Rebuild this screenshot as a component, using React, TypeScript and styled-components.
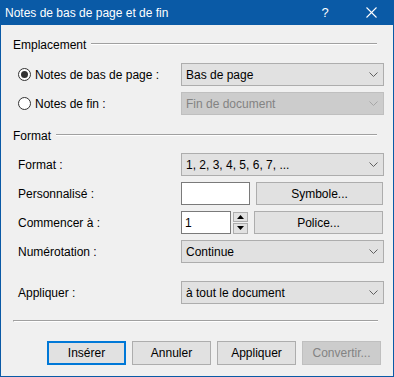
import styled, { createGlobalStyle } from 'styled-components';

const BLUE = '#0a5aa6';

const GlobalStyle = createGlobalStyle`
  html, body {
    margin: 0;
    padding: 0;
    background: #f0f0f0;
  }
  body {
    font-family: 'Liberation Sans', Arial, sans-serif;
    font-size: 12px;
    color: #000;
  }
`;

const Window = styled.div`
  width: 394px;
  height: 377px;
  box-sizing: border-box;
  border: 1px solid ${BLUE};
  border-top: none;
  background: #f0f0f0;
  display: flex;
  flex-direction: column;
`;

const TitleBar = styled.div`
  height: 25px;
  margin: 0 -1px;
  padding-left: 5px;
  background: ${BLUE};
  color: #fff;
  display: flex;
  align-items: center;
`;

const TitleText = styled.span`
  flex: 1;
`;

const TitleButton = styled.div`
  width: 46px;
  height: 25px;
  display: flex;
  align-items: center;
  justify-content: center;
  font-size: 13px;
`;

const Body = styled.div`
  padding: 12px 9px 0 12px;
  display: flex;
  flex-direction: column;
`;

const SectionHeader = styled.div<{ $top?: number }>`
  display: flex;
  align-items: center;
  gap: 5px;
  height: 16px;
  margin-top: ${(p) => p.$top ?? 0}px;
`;

const HeaderLine = styled.div`
  flex: 1;
  margin-right: 7px;
  margin-top: -2px;
  border-top: 1px solid #a0a0a0;
  border-bottom: 1px solid #fff;
`;

const Fields = styled.div<{ $top: number }>`
  display: flex;
  flex-direction: column;
  gap: 6px;
  margin-top: ${(p) => p.$top}px;
`;

const Row = styled.div<{ $top?: number }>`
  display: grid;
  grid-template-columns: 168px 203px;
  align-items: center;
  height: 23px;
  margin-top: ${(p) => p.$top ?? 0}px;
`;

const Label = styled.div`
  padding-left: 5px;
`;

const RadioLabel = styled.label`
  display: flex;
  align-items: center;
  gap: 4px;
  padding-left: 5px;
`;

const RadioCircle = styled.span<{ $checked?: boolean }>`
  width: 13px;
  height: 13px;
  box-sizing: border-box;
  border: 1px solid #333;
  border-radius: 50%;
  background: #fff;
  display: flex;
  align-items: center;
  justify-content: center;

  &::after {
    content: '';
    width: 7px;
    height: 7px;
    border-radius: 50%;
    background: ${(p) => (p.$checked ? '#333' : 'transparent')};
  }
`;

const SelectBox = styled.div<{ $disabled?: boolean }>`
  height: 23px;
  box-sizing: border-box;
  border: 1px solid ${(p) => (p.$disabled ? '#bfbfbf' : '#adadad')};
  background: ${(p) => (p.$disabled ? '#cccccc' : '#e1e1e1')};
  color: ${(p) => (p.$disabled ? '#838383' : '#000')};
  display: flex;
  align-items: center;
  padding: 0 5px 0 4px;

  span {
    flex: 1;
  }
`;

const Controls = styled.div`
  display: flex;
  align-items: center;
  height: 23px;
`;

const TextInput = styled.div<{ $width: number }>`
  width: ${(p) => p.$width}px;
  height: 23px;
  box-sizing: border-box;
  border: 1px solid #7a7a7a;
  background: #fff;
  padding-left: 3px;
  display: flex;
  align-items: center;
`;

const Spinner = styled.div`
  width: 15px;
  height: 22px;
  margin-left: 2px;
  display: flex;
  flex-direction: column;
  gap: 1px;
`;

const SpinPart = styled.div`
  flex: 1;
  box-sizing: border-box;
  border: 1px solid #adadad;
  background: #e1e1e1;
  display: flex;
  align-items: center;
  justify-content: center;
`;

const Button = styled.div<{ $default?: boolean; $disabled?: boolean }>`
  height: 23px;
  box-sizing: border-box;
  border: ${(p) => (p.$default ? '2px solid #0078d7' : `1px solid ${p.$disabled ? '#bfbfbf' : '#adadad'}`)};
  background: ${(p) => (p.$disabled ? '#cccccc' : '#e1e1e1')};
  color: ${(p) => (p.$disabled ? '#838383' : '#000')};
  display: flex;
  align-items: center;
  justify-content: center;
`;

const SideButton = styled(Button)`
  flex: 1;
  margin-left: 6px;
  margin-right: 1px;
`;

const Separator = styled.div`
  margin-top: 16px;
  margin-right: 6px;
  border-top: 1px solid #a0a0a0;
  border-bottom: 1px solid #fff;
  border-left: 1px solid #a0a0a0;
`;

const ButtonBar = styled.div`
  display: flex;
  justify-content: flex-end;
  gap: 6px;
  margin-top: 19px;
  margin-right: 3px;
`;

const DialogButton = styled(Button)`
  width: 79px;
  height: 24px;
`;

function Chevron({ disabled }: { disabled?: boolean }) {
  return (
    <svg width="9" height="5" viewBox="0 0 9 5">
      <polyline points="0.5,0.5 4.5,4.5 8.5,0.5" fill="none" stroke={disabled ? '#a6a6a6' : '#606060'} strokeWidth="1" />
    </svg>
  );
}

function Select({ value, disabled }: { value: string; disabled?: boolean }) {
  return (
    <SelectBox $disabled={disabled}>
      <span>{value}</span>
      <Chevron disabled={disabled} />
    </SelectBox>
  );
}

function Triangle({ down }: { down?: boolean }) {
  return (
    <svg width="7" height="4" viewBox="0 0 7 4">
      <polygon points={down ? '0,0 7,0 3.5,4' : '0,4 7,4 3.5,0'} fill="#000" />
    </svg>
  );
}

export default function App() {
  return (
    <>
      <GlobalStyle />
      <Window>
        <TitleBar>
          <TitleText>Notes de bas de page et de fin</TitleText>
          <TitleButton>?</TitleButton>
          <TitleButton>
            <svg width="11" height="11" viewBox="0 0 11 11">
              <line x1="0.5" y1="0.5" x2="10.5" y2="10.5" stroke="#fff" strokeWidth="1.1" />
              <line x1="10.5" y1="0.5" x2="0.5" y2="10.5" stroke="#fff" strokeWidth="1.1" />
            </svg>
          </TitleButton>
        </TitleBar>
        <Body>
          <SectionHeader>
            Emplacement
            <HeaderLine />
          </SectionHeader>
          <Fields $top={10}>
            <Row>
              <RadioLabel>
                <RadioCircle $checked />
                Notes de bas de page :
              </RadioLabel>
              <Select value="Bas de page" />
            </Row>
            <Row>
              <RadioLabel>
                <RadioCircle />
                Notes de fin :
              </RadioLabel>
              <Select value="Fin de document" disabled />
            </Row>
          </Fields>

          <SectionHeader $top={13}>
            Format
            <HeaderLine />
          </SectionHeader>
          <Fields $top={9}>
            <Row>
              <Label>Format :</Label>
              <Select value="1, 2, 3, 4, 5, 6, 7, ..." />
            </Row>
            <Row>
              <Label>Personnalisé :</Label>
              <Controls>
                <TextInput $width={69} />
                <SideButton>Symbole...</SideButton>
              </Controls>
            </Row>
            <Row>
              <Label>Commencer à :</Label>
              <Controls>
                <TextInput $width={50}>1</TextInput>
                <Spinner>
                  <SpinPart>
                    <Triangle />
                  </SpinPart>
                  <SpinPart>
                    <Triangle down />
                  </SpinPart>
                </Spinner>
                <SideButton>Police...</SideButton>
              </Controls>
            </Row>
            <Row>
              <Label>Numérotation :</Label>
              <Select value="Continue" />
            </Row>
          </Fields>

          <Row $top={18}>
            <Label>Appliquer :</Label>
            <Select value="à tout le document" />
          </Row>

          <Separator />

          <ButtonBar>
            <DialogButton $default>Insérer</DialogButton>
            <DialogButton>Annuler</DialogButton>
            <DialogButton>Appliquer</DialogButton>
            <DialogButton $disabled>Convertir...</DialogButton>
          </ButtonBar>
        </Body>
      </Window>
    </>
  );
}
